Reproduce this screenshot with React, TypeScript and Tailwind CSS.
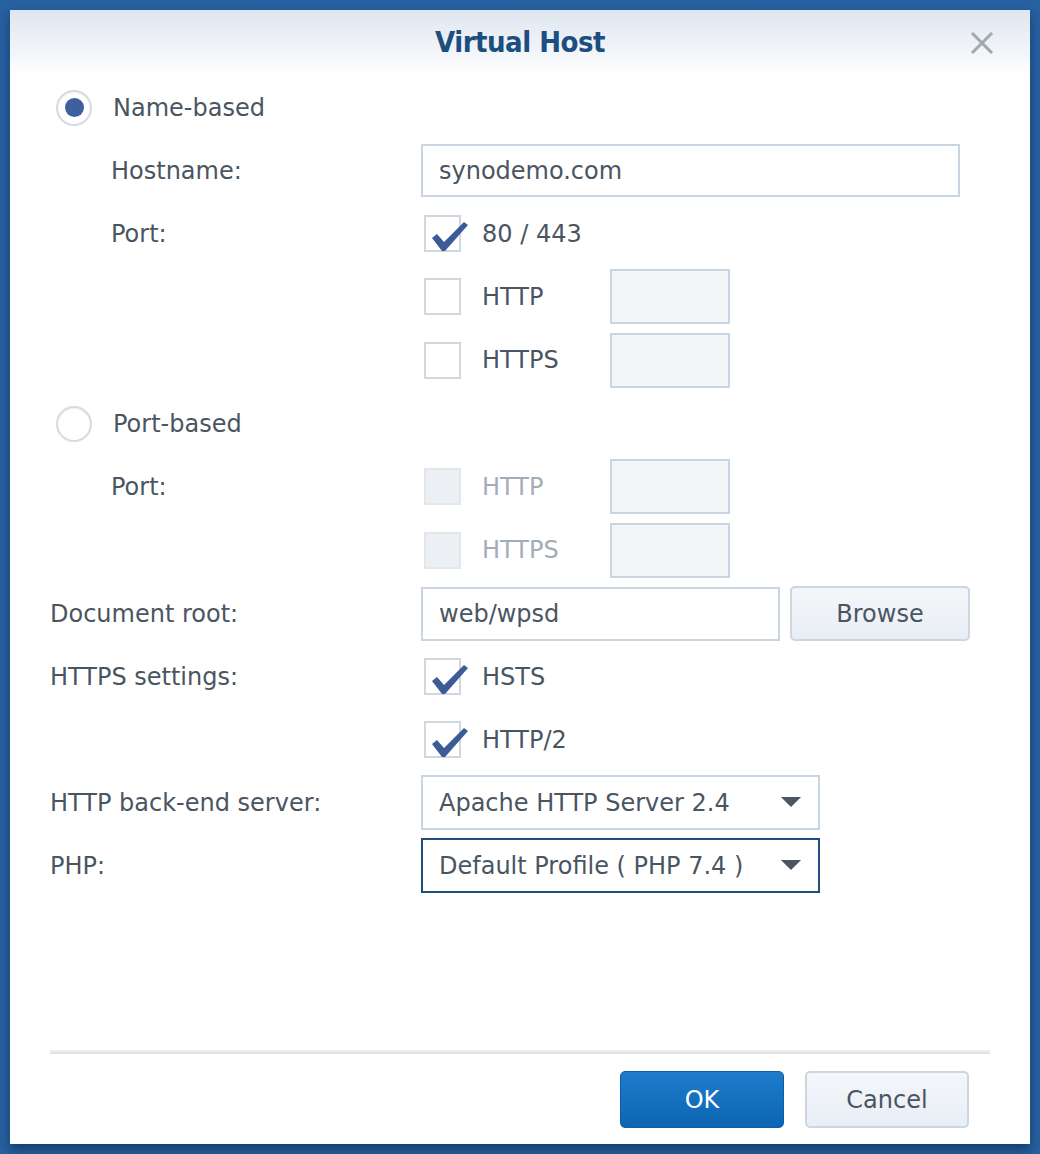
import type { ReactNode } from "react";

const FONT = { fontFamily: '"DejaVu Sans", Verdana, sans-serif' };

function Radio({ checked }: { checked?: boolean }) {
  return (
    <span className="flex h-[36px] w-[36px] items-center justify-center rounded-full border-[2px] border-[#d6dbe2] bg-white shadow-[inset_0_1px_2px_rgba(0,0,0,0.06)]">
      {checked ? <span className="h-[19px] w-[19px] rounded-full bg-[#3f5f9e]" /> : null}
    </span>
  );
}

function CheckMark() {
  return (
    <svg
      viewBox="0 0 44 36"
      className="absolute left-[0px] top-[1px] h-[36px] w-[44px]"
      aria-hidden="true"
    >
      <path
        d="M6 20 L11 16 L18 24 L38 4 L42 7 L19 33 L16 33 Z"
        fill="#3d5c97"
      />
    </svg>
  );
}

function Checkbox({ checked, disabled }: { checked?: boolean; disabled?: boolean }) {
  return (
    <span
      className={`relative block h-[37px] w-[37px] border-[2px] ${
        disabled ? "border-[#e3e7ec] bg-[#eceff4]" : "border-[#d0d7df] bg-white"
      }`}
    >
      {checked ? <CheckMark /> : null}
    </span>
  );
}

function CheckRow({
  label,
  checked,
  disabled,
  withPort,
}: {
  label: string;
  checked?: boolean;
  disabled?: boolean;
  withPort?: boolean;
}) {
  return (
    <div className="flex items-center">
      <div className="flex w-[189px] items-center">
        <span className="ml-[3px]">
          <Checkbox checked={checked} disabled={disabled} />
        </span>
        <span className={`ml-[21px] ${disabled ? "text-[#a3adb7]" : ""}`}>{label}</span>
      </div>
      {withPort ? (
        <span className="block h-[55px] w-[120px] border-[2px] border-[#c9d5e0] bg-[#f3f6f9]" />
      ) : null}
    </div>
  );
}

function Row({
  h,
  label,
  indent,
  children,
}: {
  h: string;
  label?: ReactNode;
  indent?: boolean;
  children?: ReactNode;
}) {
  return (
    <div className={`flex items-center ${h}`}>
      <div className={`${indent ? "w-[371px] pl-[61px]" : "w-[371px]"} shrink-0`}>
        {label}
      </div>
      <div className="flex items-center">{children}</div>
    </div>
  );
}

function Select({ value, focused }: { value: string; focused?: boolean }) {
  return (
    <div
      className={`flex h-[55px] w-[399px] items-center justify-between border-[2px] bg-white pl-[16px] pr-[16px] ${
        focused ? "border-[#1f4e7d]" : "border-[#c9d5e0]"
      }`}
    >
      <span>{value}</span>
      <svg viewBox="0 0 22 12" className="h-[11px] w-[22px]" aria-hidden="true">
        <path d="M0 0 H22 L11 11 Z" fill="#4d5660" />
      </svg>
    </div>
  );
}

export default function App() {
  return (
    <div
      className="h-[1154px] w-[1040px] bg-[#2860a0] pl-[10px] pt-[10px] text-[24px] text-[#4a5562]"
      style={FONT}
    >
      <div className="flex h-[1134px] w-[1020px] flex-col bg-white shadow-[0_6px_10px_rgba(10,40,80,0.6)]">
        <header className="grid h-[66px] grid-cols-[1fr_auto_1fr] items-center bg-[linear-gradient(180deg,#dfe6ef_0%,#f4f7fa_70%,#ffffff_100%)]">
          <span />
          <h1
            className="text-[29px] font-bold tracking-[-0.5px] text-[#1c4e80]"
            style={{ fontFamily: '"DejaVu Sans Condensed", "DejaVu Sans", sans-serif', fontStretch: "condensed" }}
          >
            Virtual Host
          </h1>
          <div className="flex justify-end pr-[36px]">
            <svg viewBox="0 0 24 22" className="h-[22px] w-[24px]" aria-hidden="true">
              <path d="M2 1 L22 21 M22 1 L2 21" stroke="#a2a8b0" strokeWidth="3" fill="none" />
            </svg>
          </div>
        </header>

        <div className="pl-[40px]">
          <div className="flex h-[63px] items-center pl-[6px]">
            <Radio checked />
            <span className="ml-[21px]">Name-based</span>
          </div>
          <Row h="h-[63px]" indent label="Hostname:">
            <div className="flex h-[53px] w-[539px] items-center border-[2px] border-[#c9d5e0] bg-white pl-[16px]">
              synodemo.com
            </div>
          </Row>
          <Row h="h-[63px]" indent label="Port:">
            <CheckRow label="80 / 443" checked />
          </Row>
          <Row h="h-[63px]" indent>
            <CheckRow label="HTTP" withPort />
          </Row>
          <Row h="h-[64px]" indent>
            <CheckRow label="HTTPS" withPort />
          </Row>
          <div className="flex h-[63px] items-center pl-[6px]">
            <Radio />
            <span className="ml-[21px]">Port-based</span>
          </div>
          <Row h="h-[63px]" indent label="Port:">
            <CheckRow label="HTTP" disabled withPort />
          </Row>
          <Row h="h-[64px]" indent>
            <CheckRow label="HTTPS" disabled withPort />
          </Row>
          <Row h="h-[63px]" label="Document root:">
            <div className="flex h-[54px] w-[359px] items-center border-[2px] border-[#c9d5e0] bg-white pl-[16px]">
              web/wpsd
            </div>
            <button
              type="button"
              className="ml-[10px] flex h-[55px] w-[180px] items-center justify-center rounded-[5px] border-[2px] border-[#cbd6e1] bg-[linear-gradient(180deg,#f4f7fa_0%,#e9eef4_100%)]"
            >
              Browse
            </button>
          </Row>
          <Row h="h-[63px]" label="HTTPS settings:">
            <CheckRow label="HSTS" checked />
          </Row>
          <Row h="h-[63px]">
            <CheckRow label="HTTP/2" checked />
          </Row>
          <Row h="h-[63px]" label="HTTP back-end server:">
            <Select value="Apache HTTP Server 2.4" />
          </Row>
          <Row h="h-[63px]" label="PHP:">
            <Select value="Default Profile ( PHP 7.4 )" focused />
          </Row>
        </div>

        <div className="flex-1" />

        <div className="mx-[40px] h-[4px] bg-[linear-gradient(180deg,#f2f3f3_0%,#dcdedf_100%)]" />
        <div className="flex justify-end gap-[21px] pb-[16px] pr-[61px] pt-[17px]">
          <button
            type="button"
            className="flex h-[57px] w-[164px] items-center justify-center rounded-[5px] border border-[#0d5ea8] bg-[linear-gradient(180deg,#1f7ccc_0%,#0b65b3_100%)] text-[24px] text-white"
          >
            OK
          </button>
          <button
            type="button"
            className="flex h-[57px] w-[164px] items-center justify-center rounded-[5px] border-[2px] border-[#cdd6e0] bg-[linear-gradient(180deg,#f4f7fb_0%,#e8eef5_100%)] text-[24px]"
          >
            Cancel
          </button>
        </div>
      </div>
    </div>
  );
}
